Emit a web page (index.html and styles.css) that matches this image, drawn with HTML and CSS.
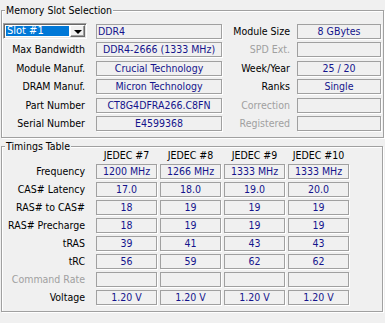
FILE: index.html
```html
<html lang="en">
<head>
    <meta charset="UTF-8">
    <title>CPU-Z | SPD</title>
    <link rel="stylesheet" href="styles.css">
</head>
<body>
    <main class="spd">
        <fieldset class="group slot-group">
            <legend>Memory Slot Selection</legend>
            <div class="slot-grid">
                <div class="combo">
                    <span class="combo-value">Slot #1</span>
                    <span class="combo-btn"><span class="arrow"></span></span>
                </div>
                <div class="field field-left">DDR4</div>
                <div class="lbl lbl-r">Module Size</div>
                <div class="field">8 GBytes</div>

                <div class="lbl">Max Bandwidth</div>
                <div class="field">DDR4-2666 (1333 MHz)</div>
                <div class="lbl lbl-r dim">SPD Ext.</div>
                <div class="field"></div>

                <div class="lbl">Module Manuf.</div>
                <div class="field">Crucial Technology</div>
                <div class="lbl lbl-r">Week/Year</div>
                <div class="field">25 / 20</div>

                <div class="lbl">DRAM Manuf.</div>
                <div class="field">Micron Technology</div>
                <div class="lbl lbl-r">Ranks</div>
                <div class="field">Single</div>

                <div class="lbl">Part Number</div>
                <div class="field">CT8G4DFRA266.C8FN</div>
                <div class="lbl lbl-r dim">Correction</div>
                <div class="field"></div>

                <div class="lbl">Serial Number</div>
                <div class="field">E4599368</div>
                <div class="lbl lbl-r dim">Registered</div>
                <div class="field"></div>
            </div>
        </fieldset>

        <fieldset class="group timing-group">
            <legend>Timings Table</legend>
            <div class="timing-grid">
                <div></div>
                <div class="head">JEDEC #7</div>
                <div class="head">JEDEC #8</div>
                <div class="head">JEDEC #9</div>
                <div class="head">JEDEC #10</div>

                <div class="lbl">Frequency</div>
                <div class="field">1200 MHz</div>
                <div class="field">1266 MHz</div>
                <div class="field">1333 MHz</div>
                <div class="field">1333 MHz</div>

                <div class="lbl">CAS# Latency</div>
                <div class="field">17.0</div>
                <div class="field">18.0</div>
                <div class="field">19.0</div>
                <div class="field">20.0</div>

                <div class="lbl">RAS# to CAS#</div>
                <div class="field">18</div>
                <div class="field">19</div>
                <div class="field">19</div>
                <div class="field">19</div>

                <div class="lbl">RAS# Precharge</div>
                <div class="field">18</div>
                <div class="field">19</div>
                <div class="field">19</div>
                <div class="field">19</div>

                <div class="lbl">tRAS</div>
                <div class="field">39</div>
                <div class="field">41</div>
                <div class="field">43</div>
                <div class="field">43</div>

                <div class="lbl">tRC</div>
                <div class="field">56</div>
                <div class="field">59</div>
                <div class="field">62</div>
                <div class="field">62</div>

                <div class="lbl dim">Command Rate</div>
                <div class="field"></div>
                <div class="field"></div>
                <div class="field"></div>
                <div class="field"></div>

                <div class="lbl">Voltage</div>
                <div class="field">1.20 V</div>
                <div class="field">1.20 V</div>
                <div class="field">1.20 V</div>
                <div class="field">1.20 V</div>
            </div>
        </fieldset>
    </main>
</body>
</html>
```

FILE: styles.css
```css
:root {
    --face: #f0f0f0;
    --edge: #a0a0a0;
    --value: #14148c;
    --dim: #a0a0a0;
    --select: #0078d7;
}

* {
    margin: 0;
    padding: 0;
    box-sizing: border-box;
}

body {
    background-color: var(--face);
    color: #000;
    font-family: "DejaVu Sans Condensed", "Liberation Sans", sans-serif;
    font-size: 10.5px;
    line-height: 15px;
}

.spd {
    width: 382px;
    margin-left: 1px;
    padding-top: 4px;
}

/* etched group box */
.group {
    border: 1px solid var(--edge);
    box-shadow: 1px 1px 0 #fff, inset 1px 1px 0 #fff;
    padding: 7px 2px 6px 2px;
}

.group legend {
    margin-left: 1px;
    padding: 0 1px;
    line-height: 13px;
    background-color: var(--face);
}

.timing-group {
    margin-top: 2px;
    padding-top: 0;
    padding-bottom: 6px;
}

.slot-grid {
    display: grid;
    grid-template-columns: 89px 126px 69px 84px;
    grid-auto-rows: 15px;
    column-gap: 3px;
    row-gap: 3.4px;
}

.timing-grid {
    display: grid;
    grid-template-columns: 89px repeat(4, 61px);
    grid-template-rows: 12px;
    grid-auto-rows: 15px;
    column-gap: 3px;
    row-gap: 3px;
    margin-top: -4px;
}

.lbl {
    text-align: right;
    padding-right: 8px;
    white-space: nowrap;
}

.lbl-r {
    padding-right: 4px;
}

.dim {
    color: var(--dim);
}

.field {
    border: 1px solid var(--edge);
    box-shadow: 1px 1px 0 #fff;
    color: var(--value);
    text-align: center;
    line-height: 13px;
    white-space: nowrap;
    overflow: hidden;
}

.field-left {
    text-align: left;
    padding-left: 1px;
}

.head {
    text-align: center;
    line-height: 12px;
}

/* classic combo box */
.combo {
    display: flex;
    width: 84px;
    height: 16px;
    margin: -1px 0 0 -1px;
    background-color: #fff;
    border: 1px solid;
    border-color: var(--edge) #fff #fff var(--edge);
    box-shadow: inset 1px 1px 0 #696969, inset -1px -1px 0 #e3e3e3;
    padding: 1px;
}

.combo-value {
    flex-grow: 1;
    margin: 1px;
    padding-left: 1px;
    background-color: var(--select);
    color: #fff;
    line-height: 10px;
    font-size: 11px;
}

.combo-btn {
    width: 15px;
    background-color: var(--face);
    border: 1px solid;
    border-color: #fff #696969 #696969 #fff;
    box-shadow: inset -1px -1px 0 #a0a0a0;
    display: flex;
    align-items: center;
    justify-content: center;
}

.arrow {
    width: 0;
    height: 0;
    border-left: 4px solid transparent;
    border-right: 4px solid transparent;
    border-top: 4px solid #000;
    margin-top: 1px;
}
```
